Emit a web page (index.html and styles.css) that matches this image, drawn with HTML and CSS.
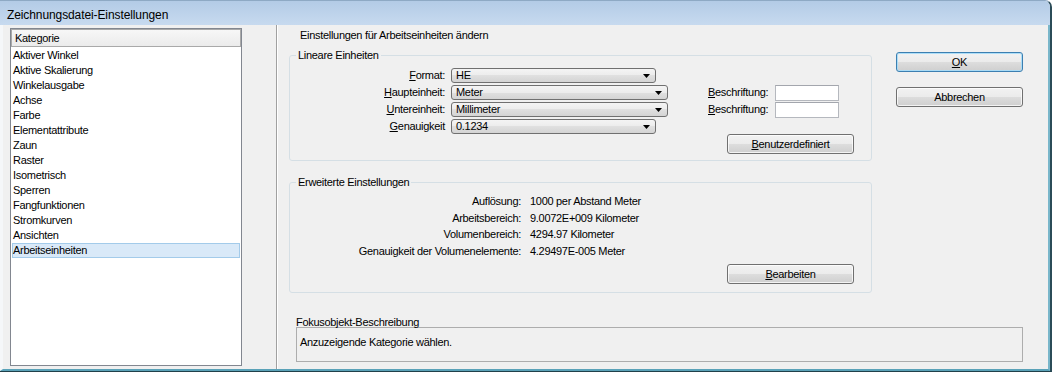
FILE: index.html
```html
<!DOCTYPE html>
<html lang="de">
<head>
<meta charset="utf-8">
<title>Zeichnungsdatei-Einstellungen</title>
<link rel="stylesheet" href="styles.css">
</head>
<body>
<div class="window">
  <div class="titlebar"><span class="title">Zeichnungsdatei-Einstellungen</span></div>
  <div class="client">
    <div class="sidebar">
      <div class="listbox">
        <div class="list-header">Kate<u>g</u>orie</div>
        <ul class="list">
          <li>Aktiver Winkel</li>
          <li>Aktive Skalierung</li>
          <li>Winkelausgabe</li>
          <li>Achse</li>
          <li>Farbe</li>
          <li>Elementattribute</li>
          <li>Zaun</li>
          <li>Raster</li>
          <li>Isometrisch</li>
          <li>Sperren</li>
          <li>Fangfunktionen</li>
          <li>Stromkurven</li>
          <li>Ansichten</li>
          <li class="selected">Arbeitseinheiten</li>
        </ul>
      </div>
    </div>
    <div class="divider"></div>
    <div class="main">
      <div class="main-top">
        <div class="settings">
          <div class="heading">Einstellungen für Arbeitseinheiten ändern</div>
          <fieldset class="group">
            <legend>Lineare Einheiten</legend>
            <div class="unit-grid">
              <label class="lbl"><u>F</u>ormat:</label>
              <div class="combo combo-short"><span>HE</span><svg class="arrow" width="7" height="4" viewBox="0 0 7 4"><path d="M0 0H7L3.5 4Z"/></svg></div>

              <label class="lbl"><u>H</u>aupteinheit:</label>
              <div class="combo"><span>Meter</span><svg class="arrow" width="7" height="4" viewBox="0 0 7 4"><path d="M0 0H7L3.5 4Z"/></svg></div>
              <label class="blbl"><u>B</u>eschriftung:</label>
              <div class="textbox"></div>

              <label class="lbl"><u>U</u>ntereinheit:</label>
              <div class="combo"><span>Millimeter</span><svg class="arrow" width="7" height="4" viewBox="0 0 7 4"><path d="M0 0H7L3.5 4Z"/></svg></div>
              <label class="blbl"><u>B</u>eschriftung:</label>
              <div class="textbox"></div>

              <label class="lbl"><u>G</u>enauigkeit</label>
              <div class="combo combo-short"><span>0.1234</span><svg class="arrow" width="7" height="4" viewBox="0 0 7 4"><path d="M0 0H7L3.5 4Z"/></svg></div>
            </div>
            <div class="actions"><button class="btn"><u>B</u>enutzerdefiniert</button></div>
          </fieldset>
          <fieldset class="group group-adv">
            <legend>Erweiterte Einstellungen</legend>
            <div class="adv-grid">
              <span class="alabel">Auflösung:</span><span>1000 per Abstand Meter</span>
              <span class="alabel">Arbeitsbereich:</span><span>9.0072E+009 Kilometer</span>
              <span class="alabel">Volumenbereich:</span><span>4294.97 Kilometer</span>
              <span class="alabel">Genauigkeit der Volumenelemente:</span><span>4.29497E-005 Meter</span>
            </div>
            <div class="actions adv-actions"><button class="btn"><u>B</u>earbeiten</button></div>
          </fieldset>
        </div>
        <div class="buttons">
          <button class="btn btn-default"><u>O</u>K</button>
          <button class="btn">Abbrechen</button>
        </div>
      </div>
      <div class="focus">
        <div class="focus-label">Fokusobjekt-Beschreibung</div>
        <div class="focus-box">Anzuzeigende Kategorie wählen.</div>
      </div>
    </div>
  </div>
</div>
</body>
</html>
```

FILE: styles.css
```css
html, body {
  margin: 0;
  padding: 0;
  background: #ffffff;
}

body {
  font-family: "Liberation Sans", Arial, sans-serif;
  font-size: 11px;
  letter-spacing: -0.3px;
  color: #000000;
}

.window {
  width: 1052px;
  height: 372px;
  box-sizing: border-box;
  display: flex;
  flex-direction: column;
  border-top: 1px solid #8ea9c4;
  border-right: 2px solid #2b4c58;
  border-bottom: 1px solid #21404a;
  border-top-right-radius: 7px;
  overflow: hidden;
  background: #f0f0f0;
}

.titlebar {
  height: 24px;
  flex: none;
  box-sizing: border-box;
  display: flex;
  align-items: center;
  padding: 4px 0 0 7px;
  background: linear-gradient(#b3cbe6, #c7daef);
  font-size: 12px;
  letter-spacing: -0.1px;
  color: #000000;
}

.client {
  flex: 1;
  display: flex;
  min-height: 0;
  border-left: 3px solid #f5f7f9;
  border-right: 2px solid #79b6ca;
  border-bottom: 2px solid #5aa2b8;
  background: #f0f0f0;
}

.sidebar {
  width: 273px;
  flex: none;
  box-sizing: border-box;
  padding: 3px 0 3px 7px;
  display: flex;
}

.listbox {
  width: 232px;
  box-sizing: border-box;
  border: 1px solid #828790;
  background: #ffffff;
  display: flex;
  flex-direction: column;
}

.list-header {
  height: 18px;
  box-sizing: border-box;
  border: 1px solid #a9a9a9;
  background: linear-gradient(#f7f7f7, #ebebeb);
  padding-left: 3px;
  line-height: 16px;
}

.list {
  list-style: none;
  margin: 1px 0 0;
  padding: 0;
}

.list li {
  height: 15px;
  box-sizing: border-box;
  line-height: 13px;
  margin: 0 1px;
  border: 1px solid transparent;
  white-space: nowrap;
}

.list li.selected {
  background: #d9e9f8;
  border-color: #a3cbea;
}

.divider {
  width: 1px;
  flex: none;
  background: #a0a0a0;
  border-right: 1px solid #ffffff;
}

.main {
  flex: 1;
  display: flex;
  flex-direction: column;
  padding: 4px 0 7px;
  min-width: 0;
}

.main-top {
  display: flex;
}

.settings {
  width: 583px;
  margin-left: 11px;
  flex: none;
}

.heading {
  height: 13px;
  line-height: 13px;
  padding-left: 11px;
  margin-bottom: 7px;
}

.group {
  margin: 0;
  padding: 0;
  min-width: 0;
  border: 1px solid #d5dfe5;
  border-radius: 3px;
}

.group legend {
  margin-left: 6px;
  padding: 0 2px;
  line-height: 13px;
}

.group-adv {
  margin-top: 15px;
}

.unit-grid {
  display: grid;
  grid-template-columns: 161px 217px 40px 67px 64px;
  grid-auto-rows: 15px;
  row-gap: 2px;
  margin-top: 6px;
  line-height: 15px;
}

.lbl {
  grid-column: 1;
  text-align: right;
  padding-right: 6px;
  white-space: nowrap;
}

.combo {
  grid-column: 2;
  display: flex;
  align-items: center;
  justify-content: space-between;
  height: 15px;
  box-sizing: border-box;
  border: 1px solid #707070;
  border-radius: 3px;
  background: linear-gradient(#f4f4f4 0%, #ececec 50%, #e0e0e0 50%, #d4d4d4 100%);
  padding: 0 5px 0 4px;
  line-height: 13px;
}

.combo-short {
  width: 205px;
}

.arrow {
  display: block;
  fill: #000000;
}

.blbl {
  grid-column: 4;
  white-space: nowrap;
}

.textbox {
  grid-column: 5;
  align-self: center;
  width: 64px;
  height: 16px;
  box-sizing: border-box;
  border: 1px solid #b5b8be;
  border-top-color: #a3a6ad;
  background: #ffffff;
}

.actions {
  display: flex;
  justify-content: flex-end;
  padding: 0 17px 6px 0;
}

.adv-actions {
  margin-top: 5px;
  padding-bottom: 8px;
}

.adv-grid {
  display: grid;
  grid-template-columns: 231px 1fr;
  column-gap: 9px;
  margin-top: 4px;
  line-height: 16.5px;
}

.alabel {
  text-align: right;
  white-space: nowrap;
}

.btn {
  width: 127px;
  height: 20px;
  box-sizing: border-box;
  border: 1px solid #707070;
  border-radius: 3px;
  background: linear-gradient(#f2f2f2 0%, #ebebeb 50%, #dddddd 50%, #cfcfcf 100%);
  box-shadow: inset 0 0 0 1px rgba(255, 255, 255, 0.75);
  font: inherit;
  letter-spacing: inherit;
  color: #000000;
  padding: 0;
  line-height: 18px;
  text-align: center;
}

.btn-default {
  border-color: #3c7fb1;
  box-shadow: inset 0 0 0 1px rgba(165, 220, 248, 0.9);
}

.buttons {
  margin-left: 24px;
  margin-top: 23px;
  display: flex;
  flex-direction: column;
  gap: 15px;
}

.focus {
  margin-top: auto;
  margin-left: 18px;
  width: 727px;
}

.focus-label {
  line-height: 12px;
  height: 12px;
  margin-bottom: -1px;
}

.focus-box {
  height: 35px;
  box-sizing: border-box;
  border: 1px solid #adadad;
  padding: 8px 3px 0;
  line-height: 13px;
}
```
